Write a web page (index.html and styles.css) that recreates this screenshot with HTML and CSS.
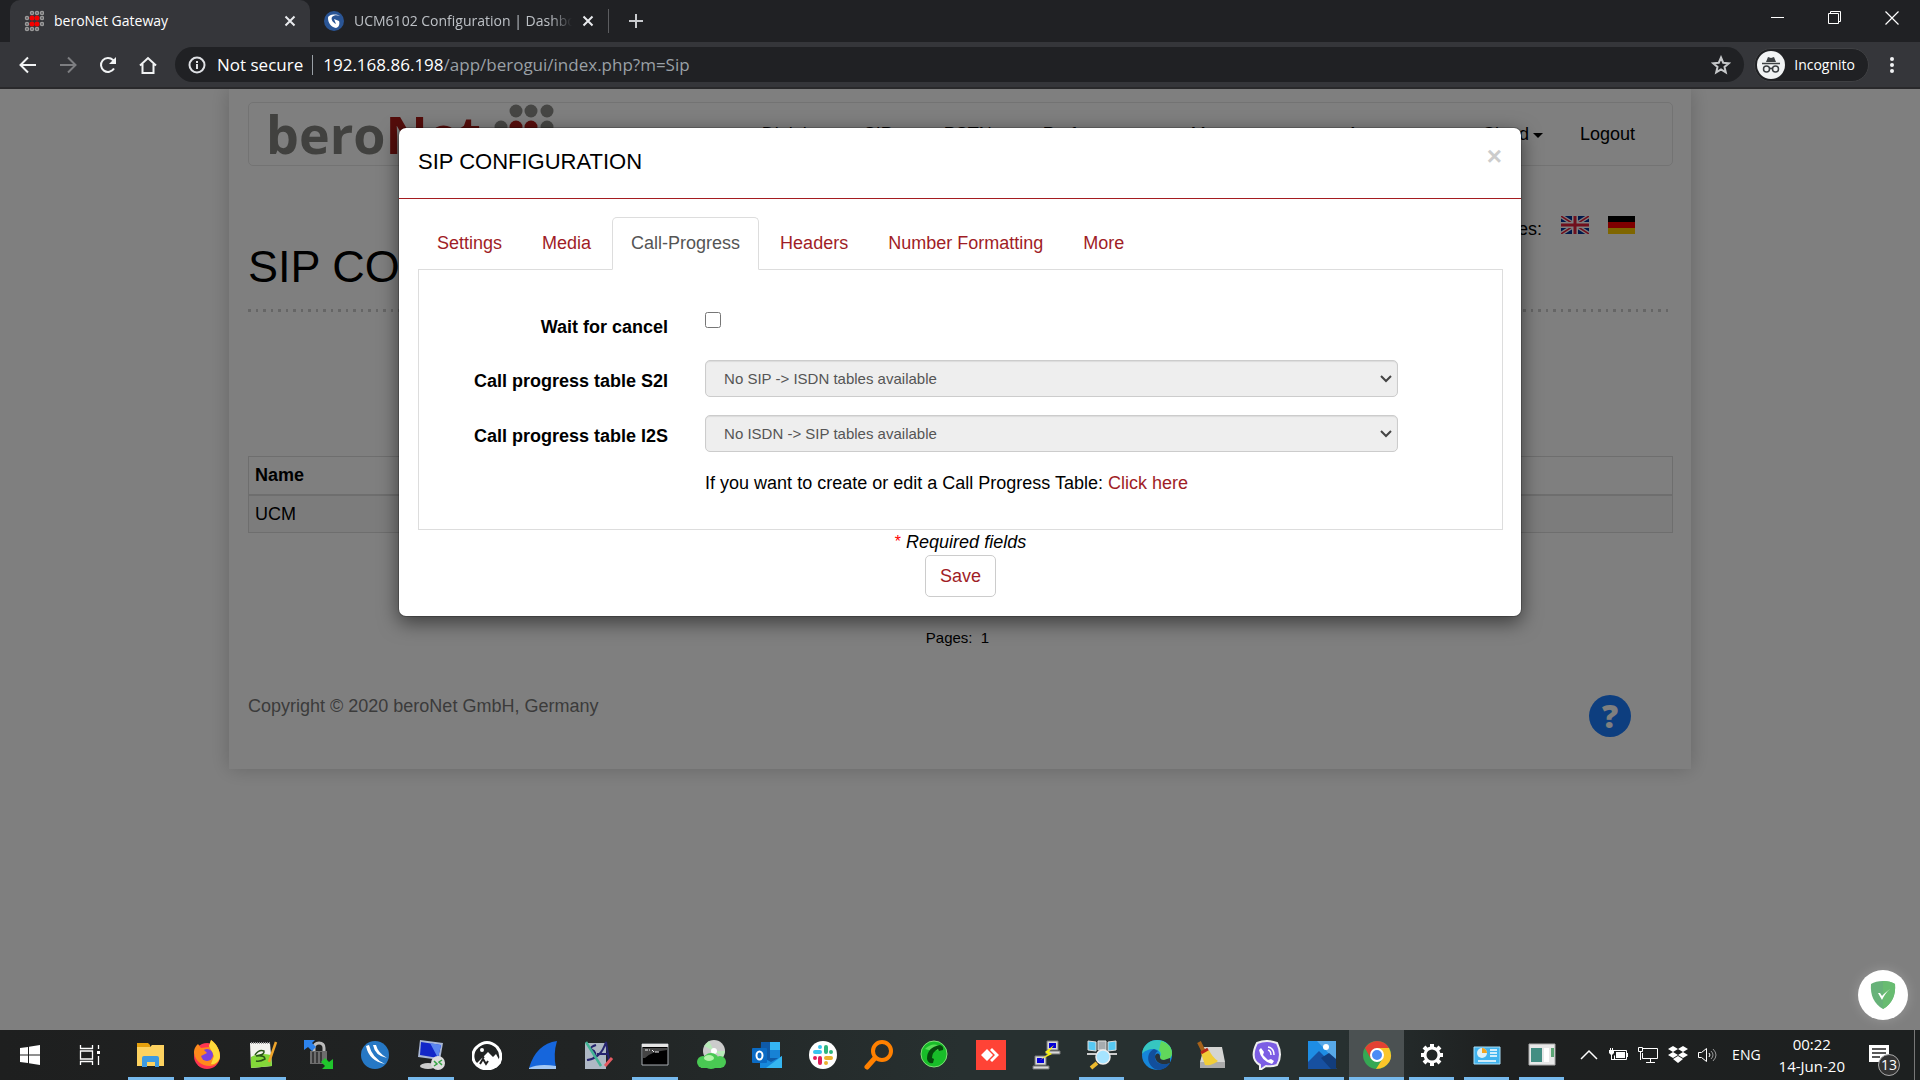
FILE: index.html
```
<!DOCTYPE html>
<html lang="en">
<head>
    <meta charset="UTF-8">
    <meta name="viewport" content="width=device-width, initial-scale=1.0">
    <title>beroNet Gateway</title>
    <link rel="stylesheet" href="styles.css">
</head>
<body>
    <!-- browser window -->
    <header class="browser">
        <div class="tabstrip">
            <div class="tab active">
                <svg class="favicon" width="20" height="24" viewBox="0 0 20 24">
                    <g fill="none" stroke="#9a9a9a" stroke-width="1.500"><circle cx="8" cy="4" r="1.500"/><circle cx="13" cy="4" r="1.500"/><circle cx="18" cy="4" r="1.500"/><circle cx="3" cy="9" r="1.500"/><circle cx="18" cy="9" r="1.500"/><circle cx="3" cy="15" r="1.500"/><circle cx="18" cy="15" r="1.500"/><circle cx="3" cy="20" r="1.500"/><circle cx="8" cy="20" r="1.500"/><circle cx="13" cy="20" r="1.500"/></g>
                    <g fill="#f40000"><circle cx="8" cy="9" r="2.500"/><circle cx="13" cy="9" r="2.500"/><circle cx="8" cy="15" r="2.500"/><circle cx="13" cy="15" r="2.500"/></g>
                </svg>
                <span class="tab-title">beroNet Gateway</span>
                <button class="tab-close" aria-label="Close tab"><svg width="12" height="12" viewBox="0 0 12 12"><path d="M1.500 1.500l9 9M10.500 1.500l-9 9" stroke="currentColor" stroke-width="2"/></svg></button>
            </div>
            <div class="tab">
                <svg class="favicon" width="20" height="20" viewBox="0 0 20 20"><circle cx="10" cy="10" r="10" fill="#2a5595"/><path d="M16 5C11 2 4 4 4 7c0 5 3 9 8 10 3-1 4-4 3-7l-5-2 2 5C8 11 7 8 8 6c2-2 5-2 8-1z" fill="#fff"/></svg>
                <span class="tab-title fade">UCM6102 Configuration | Dashboard</span>
                <button class="tab-close" aria-label="Close tab"><svg width="12" height="12" viewBox="0 0 12 12"><path d="M1.500 1.500l9 9M10.500 1.500l-9 9" stroke="currentColor" stroke-width="2"/></svg></button>
            </div>
            <button class="new-tab" aria-label="New tab"><svg width="16" height="16" viewBox="0 0 16 16"><path d="M8 1v14M1 8h14" stroke="currentColor" stroke-width="2"/></svg></button>
            <div class="window-buttons">
                <button aria-label="Minimize"><svg width="14" height="14" viewBox="0 0 14 14"><path d="M0 6.500h13" stroke="#fff"/></svg></button>
                <button aria-label="Restore"><svg width="14" height="14" viewBox="0 0 14 14" fill="none" stroke="#fff"><path d="M.5 2.500h10v10H.5zM2.500 2.500v-2h10v10h-2"/></svg></button>
                <button aria-label="Close"><svg width="14" height="14" viewBox="0 0 14 14"><path d="M.5.500l13 13M13.500.500l-13 13" stroke="#fff" stroke-width="1.200"/></svg></button>
            </div>
        </div>
        <div class="toolbar">
            <button class="tool" aria-label="Back"><svg width="20" height="20" viewBox="0 0 20 20" fill="none" stroke="#f1f3f4" stroke-width="2"><path d="M18 10H3M10 2.500L2.500 10l7.500 7.500"/></svg></button>
            <button class="tool" aria-label="Forward"><svg width="20" height="20" viewBox="0 0 20 20" fill="none" stroke="#7d7e81" stroke-width="2"><path d="M2 10h15M10 2.500l7.500 7.500-7.500 7.500"/></svg></button>
            <button class="tool" aria-label="Reload"><svg width="20" height="20" viewBox="0 0 20 20" fill="none" stroke="#f1f3f4" stroke-width="2"><path d="M16 13.500A7 7 0 1 1 15 5l2 2"/><path d="M18 2v7h-7z" fill="#f1f3f4" stroke="none"/></svg></button>
            <button class="tool" aria-label="Home"><svg width="20" height="20" viewBox="0 0 20 20" fill="none" stroke="#f1f3f4" stroke-width="2"><path d="M2 10.500L10 3l8 7.500M4.500 9v9h11V9"/></svg></button>
            <div class="address-bar">
                <svg width="18" height="18" viewBox="0 0 18 18" fill="none" stroke="#dfe1e5" stroke-width="2"><circle cx="9" cy="9" r="7.500"/><path d="M9 8v5M9 5v2"/></svg>
                <span class="not-secure">Not secure</span>
                <span class="url"><b>192.168.86.198</b>/app/berogui/index.php?m=Sip</span>
                <svg class="star" width="20" height="20" viewBox="0 0 20 20" fill="none" stroke="#c6c8ca" stroke-width="2"><path d="M10 2.500l2.200 5.200 5.600.5-4.300 3.700 1.300 5.500L10 14.500l-4.800 2.900 1.300-5.500-4.300-3.700 5.600-.5z"/></svg>
            </div>
            <div class="incognito">
                <svg width="28" height="28" viewBox="0 0 28 28"><circle cx="14" cy="14" r="14" fill="#f1f3f4"/><path d="M9 11l2-5 3 1 3-1 2 5z" fill="#3c4043"/><path d="M5 12.500h18" stroke="#3c4043" stroke-width="1.500"/><g fill="none" stroke="#3c4043" stroke-width="1.500"><circle cx="9.500" cy="18" r="3"/><circle cx="18.500" cy="18" r="3"/><path d="M12.500 18q1.500-1.500 3 0"/></g></svg>
                <span>Incognito</span>
            </div>
            <button class="tool menu" aria-label="Menu"><svg width="6" height="18" viewBox="0 0 6 18" fill="#f1f3f4"><circle cx="3" cy="3" r="2"/><circle cx="3" cy="9" r="2"/><circle cx="3" cy="15" r="2"/></svg></button>
        </div>
    </header>

    <main class="viewport">
        <div class="page">
            <nav class="navbar">
                <a class="logo" href="#">
                    <span class="bero">bero</span><span class="net">Net</span>
                    <svg width="62" height="62" viewBox="0 0 62 62">
                        <g fill="#8c8c88"><circle cx="23" cy="8" r="6.500"/><circle cx="38" cy="8" r="6.500"/><circle cx="54" cy="8" r="6.500"/><circle cx="8" cy="24" r="6.500"/><circle cx="54" cy="24" r="6.500"/><circle cx="8" cy="39" r="6.500"/><circle cx="54" cy="39" r="6.500"/><circle cx="8" cy="55" r="6.500"/><circle cx="23" cy="55" r="6.500"/><circle cx="38" cy="55" r="6.500"/></g>
                        <g fill="#b01c18"><circle cx="23" cy="24" r="6.500"/><circle cx="38" cy="24" r="6.500"/><circle cx="23" cy="39" r="6.500"/><circle cx="38" cy="39" r="6.500"/></g>
                    </svg>
                </a>
                <ul class="menu-list">
                    <li><a href="#">Dialplan</a></li>
                    <li><a class="dropdown" href="#">SIP</a></li>
                    <li><a class="dropdown" href="#">PSTN</a></li>
                    <li><a class="dropdown" href="#">Preferences</a></li>
                    <li><a class="dropdown" href="#">Management</a></li>
                    <li><a href="#">Assessment</a></li>
                    <li><a class="dropdown" href="#">Cloud</a></li>
                    <li><a href="#">Logout</a></li>
                </ul>
            </nav>

            <div class="languages">
                <span>Languages:</span>
                <a href="#" aria-label="English"><svg width="28" height="18" viewBox="0 0 28 18"><path fill="#003399" d="M0 0h28v18H0z"/><path d="M0 0l28 18M28 0L0 18" stroke="#fff" stroke-width="4"/><path d="M0 0l28 18M28 0L0 18" stroke="#e0213a" stroke-width="1.500"/><path d="M14 0v18M0 9h28" stroke="#fff" stroke-width="6"/><path d="M14 0v18M0 9h28" stroke="#e0213a" stroke-width="3"/></svg></a>
                <a href="#" aria-label="Deutsch"><svg width="27" height="18" viewBox="0 0 27 18"><path d="M0 0h27v6H0z"/><path fill="#f00" d="M0 6h27v6H0z"/><path fill="#fc0" d="M0 12h27v6H0z"/></svg></a>
            </div>

            <h1>SIP CONFIGURATION</h1>
            <div class="dots"></div>

            <table class="accounts">
                <thead><tr><th>Name</th></tr></thead>
                <tbody><tr><td>UCM</td></tr></tbody>
            </table>

            <div class="pages">Pages:&nbsp; 1</div>

            <footer class="page-footer">
                <span>Copyright © 2020 beroNet GmbH, Germany</span>
                <button class="help" aria-label="Help">?</button>
            </footer>
        </div>

        <!-- modal -->
        <div class="backdrop">
            <form class="modal">
                <div class="modal-header">
                    <h4>SIP CONFIGURATION</h4>
                    <button type="button" class="close" aria-label="Close">×</button>
                </div>
                <div class="modal-body">
                    <ul class="nav-tabs">
                        <li><a href="#">Settings</a></li>
                        <li><a href="#">Media</a></li>
                        <li><a class="active" href="#">Call-Progress</a></li>
                        <li><a href="#">Headers</a></li>
                        <li><a href="#">Number Formatting</a></li>
                        <li><a href="#">More</a></li>
                    </ul>
                    <div class="tab-content">
                        <label for="wait">Wait for cancel</label>
                        <div class="check"><input type="checkbox" id="wait"></div>
                        <label for="s2i">Call progress table S2I</label>
                        <div class="select">
                            <select id="s2i" disabled><option>No SIP -&gt; ISDN tables available</option></select>
                            <svg width="12" height="8" viewBox="0 0 12 8"><path d="M1 1l5 5 5-5" fill="none" stroke="#444" stroke-width="2"/></svg>
                        </div>
                        <label for="i2s">Call progress table I2S</label>
                        <div class="select">
                            <select id="i2s" disabled><option>No ISDN -&gt; SIP tables available</option></select>
                            <svg width="12" height="8" viewBox="0 0 12 8"><path d="M1 1l5 5 5-5" fill="none" stroke="#444" stroke-width="2"/></svg>
                        </div>
                        <p class="hint">If you want to create or edit a Call Progress Table: <a href="#">Click here</a></p>
                    </div>
                    <div class="required"><sup>*</sup> Required fields</div>
                    <button type="button" class="save">Save</button>
                </div>
            </form>
        </div>

        <div class="shield">
            <svg width="28" height="30" viewBox="0 0 28 30"><path d="M14 1c5 0 9 1 12 3 1 11-3 20-12 25C5 24 1 15 2 4c3-2 7-3 12-3z" fill="#67b279"/><path d="M14 1c5 0 9 1 12 3 1 11-3 20-12 25z" fill="#68bc71"/><path d="M9 13l4 7c2-4 4-8 8-11-3 2-6 5-8 7l-2-3z" fill="#fff"/></svg>
        </div>
    </main>

    <!-- taskbar -->
    <footer class="taskbar">
        <button class="start" aria-label="Start"><svg width="20" height="20" viewBox="0 0 20 20" fill="#fff"><path d="M0 3l8-1v7.500H0zM9 1.800L20 0v9.500H9zM0 10.500h8V18l-8-1zM9 10.500h11V20L9 18.200z"/></svg></button>
        <button class="start" aria-label="Task View"><svg width="22" height="20" viewBox="0 0 22 20" fill="none" stroke="#fff" stroke-width="1.300"><path d="M1.500 0v3.500h12V0M1.500 20v-3.500h12V20M1.500 6h12v8h-12zM19.500 0v4M19.500 11v9"/><path d="M18 6h3v3h-3z" fill="#fff" stroke="none"/></svg></button>
        <div class="apps">
            <button class="open" aria-label="File Explorer"><svg viewBox="0 0 30 30"><path d="M1 3h11l2 2v5H1z" fill="#e5a00d"/><path d="M1 7h13l2-2h12v21H1z" fill="#fdd260"/><path d="M6 27V18q0-2 2-2h13q2 0 2 2v9h-4v-5h-8v5z" fill="#3d9ae2"/></svg></button>
            <button class="open" aria-label="Firefox"><svg viewBox="0 0 30 30"><circle cx="15" cy="16" r="13" fill="#ff3550"/><path d="M2 13C2 8 4 6 6 4l3 4 8-1 2-7c5 3 9 10 9 16 0 6-5 10-10 10C9 26 3 20 2 13z" fill="#ff8a1c"/><path d="M17 6l2-6c6 4 9 11 9 17-1 5-6 8-9 7l3-8z" fill="#ffd93a"/><circle cx="15" cy="15" r="6" fill="#7a3fe0"/><path d="M5 9l7 1 3 3-6 3z" fill="#ff8a1c"/></svg></button>
            <button class="open" aria-label="Notepad++"><svg viewBox="0 0 30 30"><path d="M2 3h20l2 23-21 2z" fill="#f3f3ee"/><path d="M3 17q8-5 20-2l1 11-21 2z" fill="#83d839"/><path d="M3 3h19" stroke="#999" stroke-width="2" stroke-dasharray="1 1"/><path d="M7 15q4-6 9-4 1 4-8 5 9-1 9 3-5 3-9 2" fill="none" stroke="#295418" stroke-width="1.500"/><path d="M28 2l-7 20" stroke="#efa52b" stroke-width="2.500"/></svg></button>
            <button aria-label="WinSCP"><svg viewBox="0 0 30 30"><path d="M10 12V8q0-5 5-5t5 5v4" fill="none" stroke="#bbb" stroke-width="3"/><path d="M6 11h17v13H6z" fill="#6d6d6d"/><path d="M9 12v11M13 12v11M17 12v11" stroke="#3a3a3a" stroke-width="2"/><path d="M0 0h11L8 3l4 4-4 4-4-4-4 3z" fill="#2d83ed"/><path d="M29 29H18l3-3-4-4 4-4 4 4 4-3z" fill="#20c52c"/></svg></button>
            <button aria-label="VPN"><svg viewBox="0 0 30 30"><circle cx="15" cy="15" r="14" fill="#2678c5"/><path d="M6 6q3 15 19 18Q12 18 9 5zM13 5q2 11 14 13Q18 13 16 5z" fill="#fff"/></svg></button>
            <button class="open" aria-label="Remote Desktop"><svg viewBox="0 0 30 30"><ellipse cx="12" cy="26" rx="8" ry="3" fill="#ccc"/><path d="M4 0l23 3-3 17-22-3z" fill="#a9b7d5"/><path d="M5 2l20 3-3 13-18-3z" fill="#1226c8"/><path d="M14 3l11 2-3 13z" fill="#5b86ee"/><circle cx="22" cy="23" r="7" fill="#ddd"/><path d="M18 21l3 3-3 2m8-6l-3 2 3 3" fill="none" stroke="#36a443" stroke-width="1.500"/></svg></button>
            <button aria-label="Gallery"><svg viewBox="0 0 30 30"><path d="M5 7q10-9 20 0c6 7 4 15 0 18q-10 8-20 0C-1 20 0 11 5 7z" fill="none" stroke="#fff" stroke-width="3"/><path d="M4 24l12-12 5 5 3-3 5 9-5 5H8z" fill="#fff"/><path d="M3 14l6 1 3 3M8 24l3-5 3 5 2-3" stroke="#222" stroke-width="2" fill="none"/><circle cx="10" cy="10" r="2" fill="#fff"/></svg></button>
            <button aria-label="Wireshark"><svg viewBox="0 0 30 30"><path d="M1 28Q8 4 29 1q-4 13-1 27z" fill="#1666dc"/><path d="M1 28q10-5 27-2v3H1z" fill="#a5c9f4"/></svg></button>
            <button aria-label="XAM"><svg viewBox="0 0 30 30"><path d="M1 3h21v26H1z" fill="#aeb8c4"/><path d="M4 20q13-2 18-18l3 18M12 5q-9 3-2 6 5 7-7 9M13 14h11" fill="none" stroke="#26246f" stroke-width="2"/><path d="M2 2l15 24" stroke="#42b495" stroke-width="2.500"/><path d="M21 26l7-8" stroke="#e55b62" stroke-width="3"/></svg></button>
            <button class="open" aria-label="Command Prompt"><svg viewBox="0 0 30 30"><path d="M2 4h26v21H2z" stroke="#a8adb2" fill="#000"/><path d="M2 4h26v3H2z" fill="#e5e5e5"/><path d="M3 8h24v2Q10 12 5 18H3z" fill="#444"/><path d="M5 10h3m1 0h1m2 0l2 2m1 0h4" stroke="#eee"/></svg></button>
            <button aria-label="Disk Cloud"><svg viewBox="0 0 30 30"><circle cx="18" cy="11" r="11" fill="#ccc"/><path d="M18 11L8 6l5-5zM18 11l9 6 2-6z" fill="#b6ebb7"/><circle cx="18" cy="11" r="3" fill="#fff"/><g fill="#49c953"><circle cx="7" cy="22" r="6"/><circle cx="15" cy="21" r="8"/><circle cx="24" cy="22" r="6"/><path d="M5 22h20v6H5z"/></g><ellipse cx="13" cy="18" rx="5" ry="3" fill="#b1f4a8"/></svg></button>
            <button aria-label="Outlook"><svg viewBox="0 0 30 30"><path d="M9 2h19v26H8z" fill="#0f5aa8"/><path d="M18 2h10v8H18z" fill="#35b5f2"/><path d="M18 10h10v8H18z" fill="#1782d5"/><path d="M8 16l11 6 11-6v12H8z" fill="#1688dc"/><path d="M30 16v12H14z" fill="#35b6f1"/><rect y="8" width="15" height="15" rx="1" fill="#0b6bc4"/><ellipse cx="7.500" cy="15.500" rx="3" ry="4" fill="none" stroke="#fff" stroke-width="2"/></svg></button>
            <button aria-label="Slack"><svg viewBox="0 0 30 30"><circle cx="15" cy="15" r="14" fill="#fff"/><g fill="none" stroke-width="4" stroke-linecap="round"><path d="M12 7v0M7 12h5" stroke="#36c5f0"/><path d="M18 7v5M23 12v0" stroke="#2eb67d"/><path d="M18 18h5M18 23v0" stroke="#ecb22e"/><path d="M12 18v5M7 18v0" stroke="#e01e5a"/></g></svg></button>
            <button aria-label="Search Tool"><svg viewBox="0 0 30 30"><circle cx="18" cy="11" r="9" fill="none" stroke="#ff8000" stroke-width="4"/><path d="M11 18l-8 9" stroke="#ff8000" stroke-width="5" stroke-linecap="round"/></svg></button>
            <button aria-label="Phone"><svg viewBox="0 0 30 30"><circle cx="14" cy="14" r="13" fill="#18bd29" stroke="#81df78" stroke-width="1"/><path d="M5 9q9-9 18 0-9 3-18 0z" fill="#57dc56"/><path d="M20 5q4 1 3 5l-4 1-1-2q-6 3-6 9l2 1-1 4q-5 1-6-4Q7 7 20 5z" fill="#06490d"/></svg></button>
            <button aria-label="AnyDesk"><svg viewBox="0 0 30 30"><path d="M0 0h30v30H0z" fill="#ff4336"/><path d="M11 9l6 6-6 6-6-6zM14 10l2-2 7 7-7 7-2-2 5-5z" fill="#fff"/></svg></button>
            <button aria-label="PuTTY"><svg viewBox="0 0 30 30"><g fill="#d8d8d8" stroke="#777"><path d="M15 1h11v9H15zM14 11h14v3H14zM3 16h11v9H3zM1 26h16v3H1z"/></g><path d="M17 3h7v5h-7zM5 18h7v5H5z" fill="#0500d8"/><path d="M22 5l-9 7 3 2-8 6 12-6-3-2z" fill="#f8ef14"/></svg></button>
            <button class="open" aria-label="Network Scanner"><svg viewBox="0 0 30 30"><path d="M1 1l8 1v9l-8-1zM29 1l-8 1v9l8-1z" fill="#57c9f3" stroke="#ddd"/><path d="M11 1h8v9h-8z" fill="#a6acb0" stroke="#ddd"/><path d="M0 14h9M21 14h9" stroke="#ccc" stroke-width="2"/><path d="M10 23l-6 5" stroke="#ecb92e" stroke-width="4"/><circle cx="16" cy="17" r="7" fill="#a6e4ff" stroke="#eee" stroke-width="1.500"/></svg></button>
            <button aria-label="Edge"><svg viewBox="0 0 30 30"><circle cx="15" cy="15" r="15" fill="#1686d9"/><path d="M0 14C1 4 9 0 15 0c9 0 15 6 15 13 0 5-4 7-8 7-3 0-5-1-4-3 2-4-2-8-6-8-5 0-10 2-12 5z" fill="#36c6c0"/><path d="M19 1c7 2 11 7 11 12 0 5-4 7-8 7-3 0-5-1-4-3 2-3 1-5-1-7z" fill="#61d85b"/><path d="M12 9c-10 5-6 19 4 21 5 0 10-3 12-7-8 3-15 0-15-6 0-3 1-5 3-6z" fill="#124f9d"/><path d="M18 17q0 3 4 3l6-2v5c-8 3-14 0-15-6 0-4 5-5 5 0z" fill="#28323a"/></svg></button>
            <button aria-label="Cleaner"><svg viewBox="0 0 30 30"><path d="M7 7h18l3 15v6H3v-6z" fill="#d5d5d3"/><path d="M3 22h25v6H3z" fill="#aaa"/><path d="M2 2l5 10" stroke="#a66219" stroke-width="4"/><path d="M4 13l8-3q3 7 9 11-6 5-13 4z" fill="#f1cd39"/><path d="M4 13l7-4" stroke="#b92618" stroke-width="3"/></svg></button>
            <button class="open" aria-label="Viber"><svg viewBox="0 0 30 30"><path d="M5 3q10-4 20 0 6 12 0 22-6 2-11 1l-6 4v-5Q-3 19 5 3z" fill="#7c5de4" stroke="#eee" stroke-width="2"/><path d="M9 8l3 4-1 3 5 5 3-1 3 2-2 3Q9 21 7 10z" fill="#fff"/><path d="M16 7q6 1 6 8M16 10q3 1 3 5" fill="none" stroke="#fff" stroke-width="1.500"/></svg></button>
            <button class="open" aria-label="Photos"><svg viewBox="0 0 30 30"><path d="M1 1h28v28H1z" fill="#1e8de4"/><path d="M10 1h19v20z" fill="#58a9e8"/><path d="M1 22l11-11 18 18H1z" fill="#1750a0"/><path d="M14 18l8-5 7 6v10h-5z" fill="#123d7c"/><circle cx="19" cy="7" r="3" fill="#fff"/></svg></button>
            <button class="open current" aria-label="Chrome"><svg viewBox="0 0 30 30"><circle cx="15" cy="15" r="14" fill="#35a853"/><path d="M3 8Q8 1 15 1q8 0 12 7H15L9 19z" fill="#e34133"/><path d="M15 8h12q6 12-5 19-4 2-8 2l7-11z" fill="#fbc62a"/><circle cx="15" cy="15" r="6" fill="#4c8bf5" stroke="#fff" stroke-width="2"/></svg></button>
            <button class="open" aria-label="Settings"><svg viewBox="0 0 30 30" fill="none" stroke="#fff"><circle cx="15" cy="15" r="7" stroke-width="3"/><path d="M15 4v4M15 22v4M4 15h4M22 15h4M7 7l3 3M20 20l3 3M23 7l-3 3M10 20l-3 3" stroke-width="4"/></svg></button>
            <button class="open" aria-label="Control Panel"><svg viewBox="0 0 30 30"><path d="M2 7h26v17H2z" fill="#42b4ef" stroke="#a9def7"/><circle cx="10" cy="13" r="5" fill="#dff1f8"/><path d="M10 13V8a5 5 0 0 1 5 5z" fill="#f2a521"/><path d="M18 10h7M18 13h7M18 16h7M6 21h18" stroke="#fff" stroke-width="1.500"/></svg></button>
            <button class="open" aria-label="Window"><svg viewBox="0 0 30 30"><path d="M2 4h26v21H2z" fill="#e8e8e8" stroke="#aaa"/><path d="M4 8h11v14H4z" fill="#438e83"/><path d="M24 8h3v9h-3z" fill="#5ca675"/><path d="M17 8h5v14h-5z" fill="#fff"/></svg></button>
        </div>
        <div class="tray">
            <svg width="18" height="20" viewBox="0 0 18 20" fill="none" stroke="#fff" stroke-width="1.500"><path d="M1 14l8-8 8 8"/></svg>
            <svg width="20" height="20" viewBox="0 0 20 20"><path d="M5.500 5.500h13v9h-12v-4" fill="none" stroke="#fff"/><path d="M8 7h9v6H8zM19 8h1v4h-1zM1 5h5v3L4 10H3L1 8zM2 3h1v2H2zM4 3h1v2H4zM3 10h1v4h3v1H3z" fill="#fff"/></svg>
            <svg width="20" height="20" viewBox="0 0 20 20" fill="none" stroke="#fff"><path d="M5 3.500h14.500v10H4.500V8M12.500 13.500v4M8 17.500h9M.5 2.500h4v4h-4zM2.500 6v9"/></svg>
            <svg width="20" height="20" viewBox="0 0 20 20" fill="#fff"><path d="M5 1l5 3-5 3-5-3zM15 1l5 3-5 3-5-3zM5 7l5 3-5 3-5-3zM15 7l5 3-5 3-5-3zM10 11l5 3-5 4-5-4z"/></svg>
            <svg width="20" height="20" viewBox="0 0 20 20" fill="none" stroke="#fff"><path d="M.5 7.500h3l5-4v13l-5-4h-3z"/><path d="M11 8q2 2 0 4"/><path d="M13 6q4 4 0 8M15 4q6 6 0 12" stroke="#999"/></svg>
            <span class="lang">ENG</span>
            <div class="clock"><span>00:22</span><span>14-Jun-20</span></div>
            <div class="notifications">
                <svg width="20" height="20" viewBox="0 0 20 20"><path d="M0 0h20v17h-6v3l-4-3H0z" fill="#fff"/><path d="M3 4h14M3 8h14M3 12h8" stroke="#222" stroke-width="1.500"/></svg>
                <span class="count">13</span>
            </div>
        </div>
    </footer>
</body>
</html>
```
FILE: styles.css
```
* {
    box-sizing: border-box;
}
body {
    margin: 0;
    height: 100vh;
    display: flex;
    flex-direction: column;
    overflow: hidden;
    font-family: "Liberation Sans", Arial, sans-serif;
    font-size: 18px;
    line-height: 26px;
    color: #000;
}
button {
    font: inherit;
    color: inherit;
    background: none;
    border: none;
    padding: 0;
}
ul {
    list-style: none;
    margin: 0;
    padding: 0;
}
a {
    color: #9f1d26;
    text-decoration: none;
}
svg {
    display: block;
    flex-shrink: 0;
}

/* browser */
.browser {
    background: #35363a;
    border-bottom: 2px solid #29292b;
    font-family: "Open Sans", "Noto Sans", sans-serif;
    font-size: 14px;
    color: #fff;
}
.tabstrip {
    display: flex;
    align-items: center;
    height: 42px;
    padding-left: 10px;
    background: #202124;
}
.tab {
    display: flex;
    align-items: center;
    align-self: stretch;
    width: 298px;
    padding: 0 14px;
    gap: 10px;
    color: #bdc1c6;
}
.tab.active {
    width: 300px;
    background: #35363a;
    border-radius: 10px 10px 0 0;
    color: #fff;
}
.tab-title {
    flex: 1;
    white-space: nowrap;
    overflow: hidden;
}
.tab-title.fade {
    mask-image: linear-gradient(to right, #000 90%, transparent);
}
.tab-close {
    color: #e8eaed;
}
.new-tab {
    padding-left: 19px;
    border-left: 1px solid #5c5d60;
    height: 24px;
    color: #c9cbce;
}
.window-buttons {
    display: flex;
    margin-left: auto;
    align-self: flex-start;
}
.window-buttons button {
    width: 57px;
    height: 36px;
    display: flex;
    align-items: center;
    justify-content: center;
}
.toolbar {
    display: flex;
    align-items: center;
    height: 45px;
    padding: 0 8px;
}
.tool {
    width: 40px;
    display: flex;
    justify-content: center;
}
.address-bar {
    display: flex;
    align-items: center;
    flex: 1;
    height: 35px;
    margin: 0 10px 0 7px;
    padding: 0 13px;
    border-radius: 18px;
    background: #202124;
    font-size: 17px;
}
.not-secure {
    margin: 0 10px 0 11px;
    padding-right: 9px;
    border-right: 1px solid #9aa0a6;
    line-height: 20px;
}
.url {
    color: #9aa0a6;
}
.url b {
    font-weight: 400;
    color: #fff;
}
.star {
    margin-left: auto;
}
.incognito {
    display: flex;
    align-items: center;
    gap: 9px;
    height: 34px;
    padding: 0 13px 0 2px;
    border: 1px solid #3f4043;
    border-radius: 17px;
    background: #202124;
}
.tool.menu {
    margin-left: 3px;
}

/* gateway page */
.viewport {
    position: relative;
    flex: 1;
    min-height: 0;
    overflow: hidden;
    background: #fff;
}
.page {
    width: 1462px;
    max-width: 100%;
    margin: 0 auto;
    padding: 13px 18px 32px 19px;
    box-shadow: 0 0 19px rgba(0, 0, 0, 0.2);
}
.navbar {
    display: flex;
    align-items: center;
    justify-content: space-between;
    height: 64px;
    border: 1px solid #e7e7e7;
    border-radius: 5px;
}
.logo {
    display: flex;
    align-items: center;
    padding-left: 17px;
    font-family: "Open Sans", sans-serif;
    font-size: 52px;
    font-weight: 700;
    line-height: 62px;
}
.logo svg {
    margin-left: 12px;
}
.bero {
    color: #83837e;
}
.net {
    color: #a81a16;
}
.menu-list {
    display: flex;
    padding-right: 19px;
}
.menu-list a {
    display: block;
    padding: 0 18px 0 19px;
    color: #000;
}
.dropdown::after {
    content: "";
    display: inline-block;
    margin-left: 4px;
    vertical-align: middle;
    border-top: 5px solid #000;
    border-left: 5px solid transparent;
    border-right: 5px solid transparent;
}
.languages {
    display: flex;
    justify-content: flex-end;
    gap: 19px;
    margin-top: 50px;
    padding-right: 38px;
}
h1 {
    margin: 0;
    font-size: 45px;
    font-weight: 400;
    line-height: 50px;
}
.dots {
    height: 3px;
    margin-top: 17px;
    background: repeating-linear-gradient(90deg, #ccc 0 3px, transparent 3px 8px, #ccc 8px 10px, transparent 10px 15px);
}
.accounts {
    width: 100%;
    margin-top: 144px;
    border-collapse: collapse;
    border: 1px solid #ddd;
}
.accounts th,
.accounts td {
    height: 38px;
    padding: 5px 6px;
    text-align: left;
}
.accounts th {
    border-bottom: 2px solid #ddd;
}
.accounts td {
    background: #f9f9f9;
}
.pages {
    margin-top: 92px;
    padding-right: 6px;
    text-align: center;
    font-size: 15px;
}
.page-footer {
    display: flex;
    justify-content: space-between;
    margin-top: 42px;
    padding-right: 42px;
    color: #777;
}
.help {
    width: 42px;
    height: 42px;
    margin-top: 2px;
    border-radius: 50%;
    background: #1a7cff;
    color: #fff;
    font-family: "Open Sans", sans-serif;
    font-size: 32px;
    font-weight: 800;
}

/* modal */
.backdrop {
    position: absolute;
    inset: 0;
    padding-top: 38px;
    background: rgba(0, 0, 0, 0.5);
}
.modal {
    width: 1124px;
    max-width: 100%;
    margin: 0 auto;
    background: #fff;
    border: 1px solid rgba(0, 0, 0, 0.2);
    background-clip: padding-box;
    border-radius: 8px;
    box-shadow: 0 6px 19px rgba(0, 0, 0, 0.5);
}
.modal-header {
    display: flex;
    justify-content: space-between;
    height: 71px;
    padding: 17px 19px;
    border-bottom: 1px solid #a51c20;
}
.modal-header h4 {
    margin: 0;
    padding-top: 4px;
    font-size: 22px;
    font-weight: 400;
}
.close {
    height: 22px;
    font-size: 26px;
    font-weight: 700;
    line-height: 22px;
    color: #ccc;
}
.modal-body {
    padding: 18px 18px 19px 19px;
    text-align: center;
}
.nav-tabs {
    display: flex;
    gap: 2px;
}
.nav-tabs a {
    display: block;
    height: 52px;
    padding: 12px 18px;
    border: 1px solid transparent;
}
.nav-tabs .active {
    position: relative;
    height: 53px;
    margin-bottom: -1px;
    border-color: #ddd;
    border-bottom-color: #fff;
    border-radius: 5px 5px 0 0;
    background: #fff;
    color: #555;
}
.tab-content {
    display: grid;
    grid-template-columns: 23% 64%;
    gap: 18px 37px;
    padding: 36px 0 33px;
    border: 1px solid #ddd;
    text-align: left;
}
.tab-content label {
    padding-top: 8px;
    text-align: right;
    font-weight: 700;
}
.check {
    height: 36px;
}
.check input {
    display: block;
    width: 16px;
    height: 16px;
    margin: 6px 0 0;
}
.select {
    position: relative;
}
.select select {
    appearance: none;
    display: block;
    width: 100%;
    height: 37px;
    padding: 0 18px;
    border: 1px solid #ccc;
    border-radius: 5px;
    background: #eee;
    box-shadow: inset 0 1px 1px rgba(0, 0, 0, 0.08);
    font: inherit;
    font-size: 15px;
    color: #555;
    opacity: 1;
}
.select svg {
    position: absolute;
    right: 6px;
    top: 15px;
}
.hint {
    grid-column: 2;
    margin: 0;
}
.required {
    height: 25px;
    line-height: 24px;
    font-style: italic;
}
.required sup {
    font-size: 16px;
    font-style: normal;
    line-height: 0;
    vertical-align: 1px;
    color: #f00;
}
.save {
    height: 42px;
    padding: 0 14px;
    border: 1px solid #ccc;
    border-radius: 5px;
    background: #fff;
    color: #9f1d26;
}
.shield {
    position: absolute;
    right: 12px;
    bottom: 10px;
    display: flex;
    align-items: center;
    justify-content: center;
    width: 50px;
    height: 50px;
    border-radius: 50%;
    background: #fff;
    box-shadow: 0 0 12px rgba(255, 255, 255, 0.2);
}

/* taskbar */
.taskbar {
    display: flex;
    height: 50px;
    background: linear-gradient(90deg, #1e1f1f, #212424 30%, #273030 50%, #273030 70%, #1e2020 78%, #1d2020);
    font-family: "Open Sans", "Noto Sans", sans-serif;
    font-size: 14px;
    color: #fff;
}
.start {
    display: flex;
    align-items: center;
    justify-content: center;
    width: 60px;
}
.apps {
    display: flex;
    margin-left: 3px;
}
.apps button {
    width: 56px;
    border: solid transparent;
    border-width: 0 5px;
    display: flex;
    align-items: center;
    justify-content: center;
}
.apps button:nth-child(n+17) {
    width: 55px;
}
.apps svg {
    width: 30px;
    height: 30px;
}
.apps .open {
    background: linear-gradient(#76b9ed, #76b9ed) bottom / 100% 3px no-repeat content-box;
}
.apps .current {
    border-width: 0;
    background-color: #4b5152;
}
.tray {
    display: flex;
    align-items: center;
    gap: 10px;
    margin-left: auto;
    padding-right: 5px;
}
.lang {
    margin-left: 4px;
}
.clock {
    display: flex;
    flex-direction: column;
    align-items: center;
    margin: 0 14px 0 8px;
    font-size: 15px;
    line-height: 22px;
}
.notifications {
    position: relative;
    height: 50px;
    padding: 15px 25px 0 0;
    border-right: 1px solid #777;
}
.count {
    position: absolute;
    left: 9px;
    top: 24px;
    width: 22px;
    height: 22px;
    border: 1px solid #aaa;
    border-radius: 50%;
    background: #333;
    line-height: 20px;
    text-align: center;
}
```
